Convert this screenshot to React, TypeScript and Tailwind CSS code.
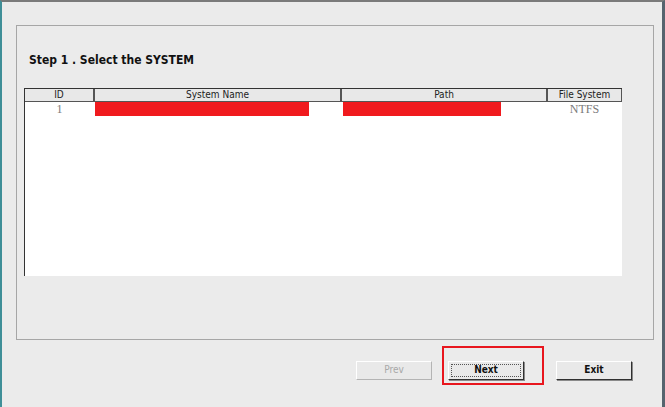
const COLUMNS = [
  { label: "ID", width: "w-[69px]" },
  { label: "System Name", width: "w-[247px]" },
  { label: "Path", width: "w-[206px]" },
  { label: "File System", width: "w-[75px]" },
];

function WinButton({
  label,
  disabled,
  focused,
}: {
  label: string;
  disabled?: boolean;
  focused?: boolean;
}) {
  return (
    <button
      disabled={disabled}
      className={
        "w-[76px] h-[19px] box-border p-[2px] bg-[#e9e9e9] border border-t-white border-l-white " +
        (disabled
          ? "border-r-[#b4b4b4] border-b-[#b4b4b4]"
          : "border-r-[#303030] border-b-[#303030] shadow-[1px_1px_0_#8a8a8a]")
      }
    >
      <span
        className={
          "flex h-full w-full items-center justify-center text-[10px] leading-none font-['DejaVu_Sans_Condensed','DejaVu_Sans',sans-serif] " +
          (disabled ? "text-[#a8a8a8]" : "text-[#111] font-semibold") +
          (focused ? " border border-dotted border-[#555]" : " border border-transparent")
        }
      >
        {label}
      </span>
    </button>
  );
}

export default function App() {
  return (
    <div className="w-[665px] h-[407px] box-border overflow-hidden bg-[#ebebeb] border-t-2 border-t-[#7a7a7a] border-l-2 border-l-[#3f8f98] border-r-[3px] border-r-[#56636e] font-['DejaVu_Sans',sans-serif]">
      {/* Group panel */}
      <div className="ml-[14px] mt-[23px] w-[638px] h-[315px] box-border border border-[#a6a6a6] flex flex-col">
        <h1 className="ml-[12px] mt-[26px] h-[16px] text-[12px] leading-[16px] font-bold text-[#111] font-['DejaVu_Sans_Condensed','DejaVu_Sans',sans-serif]">
          Step 1 . Select the SYSTEM
        </h1>

        {/* Table */}
        <div className="ml-[7px] mt-[20px] w-[598px] h-[188px] box-border bg-white border-l border-t border-[#333]">
          <div className="flex h-[13px] bg-[#e8e8e8]">
            {COLUMNS.map((c, i) => (
              <div
                key={c.label}
                className={
                  c.width +
                  " box-border h-[13px] flex items-center justify-center text-[10px] leading-none text-[#222] font-['DejaVu_Sans_Condensed','DejaVu_Sans',sans-serif] border-b border-r border-[#555]" +
                  (i === 0 ? "" : " border-l border-l-[#555]")
                }
              >
                {c.label}
              </div>
            ))}
          </div>
          <div className="flex h-[14px] font-['Liberation_Serif',serif] text-[12px] text-[#7a7a7a] leading-none">
            <div className="w-[69px] flex items-center justify-center">1</div>
            <div className="w-[247px]">
              <div className="ml-[1px] w-[214px] h-[14px] bg-[#f01a1e]" />
            </div>
            <div className="w-[206px]">
              <div className="ml-[2px] w-[158px] h-[14px] bg-[#f01a1e]" />
            </div>
            <div className="w-[75px] flex items-center justify-center">NTFS</div>
          </div>
        </div>
      </div>

      {/* Buttons */}
      <div className="flex items-start ml-[354px] mt-[6px]">
        <div className="mt-[10px]">
          <WinButton label="Prev" disabled />
        </div>
        <div className="ml-[10px] w-[102px] h-[39px] box-border border-2 border-[#e8161e] pl-[4px] pt-[8px]">
          <WinButton label="Next" focused />
        </div>
        <div className="ml-[12px] mt-[10px]">
          <WinButton label="Exit" />
        </div>
      </div>
    </div>
  );
}
